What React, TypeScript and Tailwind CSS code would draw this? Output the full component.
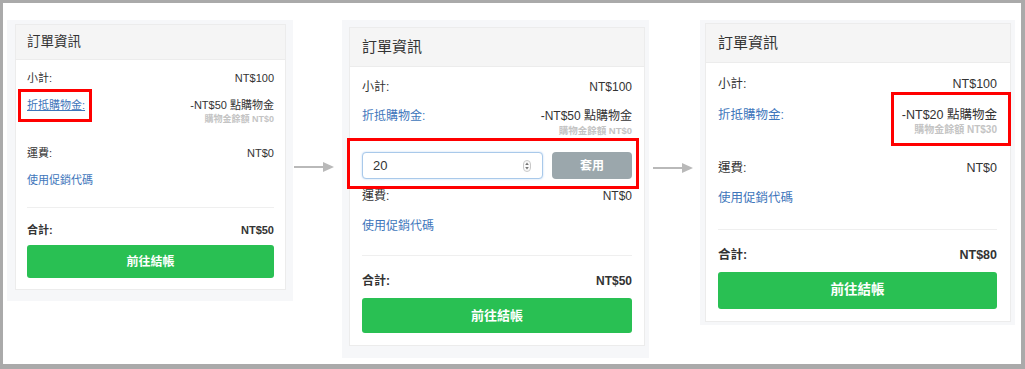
import React from "react";

const font = { fontFamily: '"Liberation Sans", "Noto Sans CJK TC", sans-serif' };

function Arrow() {
  return (
    <svg width="40" height="10" viewBox="0 0 40 10" className="block">
      <rect x="0" y="4" width="30" height="2" fill="#b9b9b9" />
      <polygon points="29,0 40,5 29,10" fill="#b9b9b9" />
    </svg>
  );
}

function Spinner() {
  return (
    <svg width="8" height="12" viewBox="0 0 8 12" className="block">
      <rect x="0.5" y="0.5" width="7" height="11" rx="3.5" fill="#fafafa" stroke="#c9c9c9" />
      <polygon points="4,2.5 5.8,5 2.2,5" fill="#777" />
      <polygon points="4,9.5 5.8,7 2.2,7" fill="#777" />
    </svg>
  );
}

function RedBox({ className }: { className: string }) {
  return <span className={"pointer-events-none absolute border-[3px] border-[#ff0000] " + className} />;
}

export default function App() {
  return (
    <div style={font} className="box-border h-[369px] w-[1025px] overflow-hidden border-b-[5px] border-l-[3px] border-r-[4px] border-t-[3px] border-[#aaaaaa] bg-white text-[#333]">
      <div className="flex items-start pl-[4px] pt-[17px]">
        {/* panel 1 */}
        <div className="w-[286px] bg-[#f6f7f9] pb-[11px] pl-[8px] pr-[7px] pt-[4px]">
          <div className="border border-[#ececec] bg-white">
            <div className="flex h-[35px] items-center border-b border-[#ececec] bg-[#f5f5f5] px-[11px] text-[13.5px]">訂單資訊</div>
            <div className="px-[11px] pb-[11px] pt-[8px] text-[11px]">
              <div className="flex h-[20px] items-center justify-between">
                <span>小計:</span>
                <span>NT$100</span>
              </div>
              <div className="mt-[9px] flex justify-between">
                <span className="relative h-[16px] leading-[16px] text-[#3e76bb] underline">
                  折抵購物金:
                  <RedBox className="left-[-9px] top-[-8px] h-[33px] w-[74px]" />
                </span>
                <div className="text-right">
                  <div className="h-[16px] leading-[16px]">-NT$50 點購物金</div>
                  <div className="h-[12px] text-[9px] font-semibold leading-[12px] text-[#c4c4c4]">購物金餘額 NT$0</div>
                </div>
              </div>
              <div className="mt-[18px] flex h-[20px] items-center justify-between">
                <span>運費:</span>
                <span>NT$0</span>
              </div>
              <div className="mt-[7px] flex h-[20px] items-center text-[#3e76bb]">使用促銷代碼</div>
              <div className="mt-[17px] h-px bg-[#efefef]" />
              <div className="mt-[12px] flex h-[20px] items-center justify-between font-bold">
                <span>合計:</span>
                <span>NT$50</span>
              </div>
              <button className="mt-[5px] flex h-[33px] w-full items-center justify-center rounded-[3px] bg-[#29c053] text-[12px] font-bold text-white">前往結帳</button>
            </div>
          </div>
        </div>

        <div className="w-[49px] pl-[1px] pt-[142px]">
          <Arrow />
        </div>

        {/* panel 2 */}
        <div className="w-[307px] bg-[#f6f7f9] pb-[12px] pl-[7px] pr-[4px] pt-[7px]">
          <div className="border border-[#ececec] bg-white">
            <div className="flex h-[39px] items-center border-b border-[#ececec] bg-[#f5f5f5] px-[12px] text-[15px]">訂單資訊</div>
            <div className="px-[12px] pb-[12px] pt-[10px] text-[12px]">
              <div className="flex h-[20px] items-center justify-between">
                <span>小計:</span>
                <span>NT$100</span>
              </div>
              <div className="mt-[10px] flex justify-between">
                <span className="h-[18px] leading-[18px] text-[#3e76bb]">折抵購物金:</span>
                <div className="text-right">
                  <div className="h-[18px] leading-[18px]">-NT$50 點購物金</div>
                  <div className="h-[12px] text-[9.5px] font-semibold leading-[12px] text-[#c4c4c4]">購物金餘額 NT$0</div>
                </div>
              </div>
              <div className="relative mt-[15px] flex h-[27px] gap-[9px]">
                <div className="flex h-full flex-1 items-center justify-between rounded-[4px] border border-[#a9c9ea] bg-white pl-[10px] pr-[11px] text-[13px] shadow-[0_0_2px_rgba(100,160,230,0.45)]">
                  <span>20</span>
                  <Spinner />
                </div>
                <button className="flex h-full w-[80px] items-center justify-center rounded-[4px] bg-[#9ba7ac] font-bold text-white">套用</button>
                <RedBox className="bottom-[-10px] left-[-15px] right-[-7px] top-[-14px]" />
              </div>
              <div className="mt-[7px] flex h-[20px] items-center justify-between">
                <span>運費:</span>
                <span>NT$0</span>
              </div>
              <div className="mt-[10px] flex h-[20px] items-center text-[#3e76bb]">使用促銷代碼</div>
              <div className="mt-[19px] h-px bg-[#efefef]" />
              <div className="mt-[15px] flex h-[20px] items-center justify-between font-bold">
                <span>合計:</span>
                <span>NT$50</span>
              </div>
              <button className="mt-[7px] flex h-[35px] w-full items-center justify-center rounded-[3px] bg-[#29c053] text-[13px] font-bold text-white">前往結帳</button>
            </div>
          </div>
        </div>

        <div className="w-[51px] pl-[4px] pt-[143px]">
          <Arrow />
        </div>

        {/* panel 3 */}
        <div className="w-[315px] bg-[#f6f7f9] pb-[3px] pl-[5px] pr-[4px] pt-[3px]">
          <div className="border border-[#ececec] bg-white">
            <div className="flex h-[39px] items-center border-b border-[#ececec] bg-[#f5f5f5] px-[12px] text-[15px]">訂單資訊</div>
            <div className="pb-[12px] pl-[12px] pr-[13px] pt-[11px] text-[12.5px]">
              <div className="flex h-[20px] items-center justify-between">
                <span>小計:</span>
                <span>NT$100</span>
              </div>
              <div className="relative mt-[12px] flex justify-between">
                <span className="h-[18px] leading-[18px] text-[#3e76bb]">折抵購物金:</span>
                <div className="text-right">
                  <div className="h-[18px] leading-[18px]">-NT$20 點購物金</div>
                  <div className="h-[12px] text-[10px] font-semibold leading-[12px] text-[#c4c4c4]">購物金餘額 NT$30</div>
                </div>
                <RedBox className="bottom-[-10px] right-[-14px] top-[-14px] w-[120px]" />
              </div>
              <div className="mt-[22px] flex h-[20px] items-center justify-between">
                <span>運費:</span>
                <span>NT$0</span>
              </div>
              <div className="mt-[10px] flex h-[20px] items-center text-[#3e76bb]">使用促銷代碼</div>
              <div className="mt-[21px] h-px bg-[#efefef]" />
              <div className="mt-[15px] flex h-[20px] items-center justify-between font-bold">
                <span>合計:</span>
                <span>NT$80</span>
              </div>
              <button className="mt-[7px] flex h-[37px] w-full items-center justify-center rounded-[3px] bg-[#29c053] text-[13.5px] font-bold text-white">前往結帳</button>
            </div>
          </div>
        </div>
      </div>
    </div>
  );
}
